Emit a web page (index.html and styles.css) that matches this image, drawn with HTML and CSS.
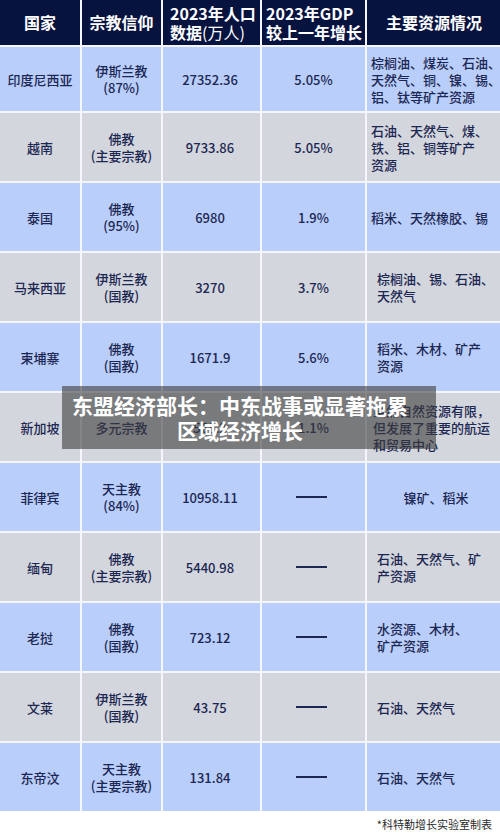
FILE: index.html
```html
<!DOCTYPE html>
<html lang="zh-CN">
<head>
<meta charset="utf-8">
<title>东盟国家概况</title>
<link rel="stylesheet" href="styles.css">
</head>
<body>
<div class="page">
  <div class="table">
    <div class="hd"><div>国家</div></div>
    <div class="hd"><div>宗教信仰</div></div>
    <div class="hd hd-left hd-pop"><div>2023年人口<br>数据<span class="light">(万人)</span></div></div>
    <div class="hd hd-left hd-gdp"><div>2023年GDP<br>较上一年增长</div></div>
    <div class="hd"><div>主要资源情况</div></div>

    <div class="c blue"><div>印度尼西亚</div></div>
    <div class="c blue"><div>伊斯兰教<br>(87%)</div></div>
    <div class="c blue num"><div>27352.36</div></div>
    <div class="c blue"><div>5.05%</div></div>
    <div class="c blue res"><div>棕榈油、煤炭、石油、<br>天然气、铜、镍、锡、<br>铝、钛等矿产资源</div></div>

    <div class="c grey"><div>越南</div></div>
    <div class="c grey"><div>佛教<br>(主要宗教)</div></div>
    <div class="c grey num"><div>9733.86</div></div>
    <div class="c grey"><div>5.05%</div></div>
    <div class="c grey res"><div>石油、天然气、煤、<br>铁、铝、铜等矿产<br>资源</div></div>

    <div class="c blue"><div>泰国</div></div>
    <div class="c blue"><div>佛教<br>(95%)</div></div>
    <div class="c blue num"><div>6980</div></div>
    <div class="c blue"><div>1.9%</div></div>
    <div class="c blue res"><div>稻米、天然橡胶、锡</div></div>

    <div class="c grey"><div>马来西亚</div></div>
    <div class="c grey"><div>伊斯兰教<br>(国教)</div></div>
    <div class="c grey num"><div>3270</div></div>
    <div class="c grey"><div>3.7%</div></div>
    <div class="c grey res res-in"><div>棕榈油、锡、石油、<br>天然气</div></div>

    <div class="c blue"><div>柬埔寨</div></div>
    <div class="c blue"><div>佛教<br>(国教)</div></div>
    <div class="c blue num"><div>1671.9</div></div>
    <div class="c blue"><div>5.6%</div></div>
    <div class="c blue res res-in"><div>稻米、木材、矿产<br>资源</div></div>

    <div class="c grey"><div>新加坡</div></div>
    <div class="c grey"><div>多元宗教</div></div>
    <div class="c grey num"><div>568.2</div></div>
    <div class="c grey"><div>1.1%</div></div>
    <div class="c grey res res-mid"><div>虽然自然资源有限，<br>但发展了重要的航运<br>和贸易中心</div></div>

    <div class="c blue"><div>菲律宾</div></div>
    <div class="c blue"><div>天主教<br>(84%)</div></div>
    <div class="c blue num"><div>10958.11</div></div>
    <div class="c blue"><span class="dash"></span></div>
    <div class="c blue res-center"><div>镍矿、稻米</div></div>

    <div class="c grey"><div>缅甸</div></div>
    <div class="c grey"><div>佛教<br>(主要宗教)</div></div>
    <div class="c grey num"><div>5440.98</div></div>
    <div class="c grey"><span class="dash"></span></div>
    <div class="c grey res res-in"><div>石油、天然气、矿<br>产资源</div></div>

    <div class="c blue"><div>老挝</div></div>
    <div class="c blue"><div>佛教<br>(国教)</div></div>
    <div class="c blue num"><div>723.12</div></div>
    <div class="c blue"><span class="dash"></span></div>
    <div class="c blue res res-in"><div>水资源、木材、<br>矿产资源</div></div>

    <div class="c grey"><div>文莱</div></div>
    <div class="c grey"><div>伊斯兰教<br>(国教)</div></div>
    <div class="c grey num"><div>43.75</div></div>
    <div class="c grey"><span class="dash"></span></div>
    <div class="c grey res res-in"><div>石油、天然气</div></div>

    <div class="c blue"><div>东帝汶</div></div>
    <div class="c blue"><div>天主教<br>(主要宗教)</div></div>
    <div class="c blue num"><div>131.84</div></div>
    <div class="c blue"><span class="dash"></span></div>
    <div class="c blue res res-in"><div>石油、天然气</div></div>
  </div>
  <div class="foot">*科特勒增长实验室制表</div>
  <div class="caption">东盟经济部长：中东战事或显著拖累<br>区域经济增长</div>
</div>
</body>
</html>
```

FILE: styles.css
```css
html, body {
  margin: 0;
  padding: 0;
  background: #ffffff;
}

.page {
  position: relative;
  width: 500px;
  height: 835px;
  overflow: hidden;
  font-family: "Noto Sans CJK SC", "Noto Sans", sans-serif;
  color: #1c2753;
}

.table {
  display: grid;
  grid-template-columns: 80px 79px 97px 103px 1fr;
  grid-template-rows: 45px 64px repeat(10, 68px);
  column-gap: 2px;
  row-gap: 2px;
  background: #f4f6fb;
}

.hd {
  background: #07133f;
  color: #ffffff;
  font-weight: 700;
  font-size: 16px;
  line-height: 19px;
  display: flex;
  align-items: center;
  justify-content: center;
  text-align: center;
  white-space: nowrap;
}

.hd-left {
  justify-content: flex-start;
  text-align: left;
}

.hd-pop {
  padding-left: 7px;
}

.hd-gdp {
  padding-left: 4px;
}

.light {
  font-weight: 400;
}

.c {
  display: flex;
  align-items: center;
  justify-content: center;
  text-align: center;
  font-size: 13px;
  font-weight: 500;
  line-height: 17px;
  white-space: nowrap;
}

.blue {
  background: #b9cefa;
}

.grey {
  background: #d3d6dc;
}

.num {
  padding-right: 3px;
}

.res {
  justify-content: flex-start;
  text-align: left;
  padding-left: 4px;
}

.res-in {
  padding-left: 10px;
}

.res-mid {
  padding-left: 6px;
}

.res-center {
  justify-content: center;
  padding-left: 4px;
}

.dash {
  display: block;
  width: 31px;
  height: 2px;
  background: #1c2753;
  margin-right: 4px;
}

.foot {
  display: flex;
  justify-content: flex-end;
  padding: 6px 8px 0 0;
  font-size: 11px;
  line-height: 15px;
  color: #2a2a2a;
}

.caption {
  position: absolute;
  left: 62px;
  top: 386px;
  width: 336px;
  padding: 6.5px 28px 6.5px 10px;
  background: rgba(60, 60, 60, 0.6);
  color: #ffffff;
  font-size: 21px;
  line-height: 25px;
  font-weight: 700;
  text-align: center;
  white-space: nowrap;
}
```
